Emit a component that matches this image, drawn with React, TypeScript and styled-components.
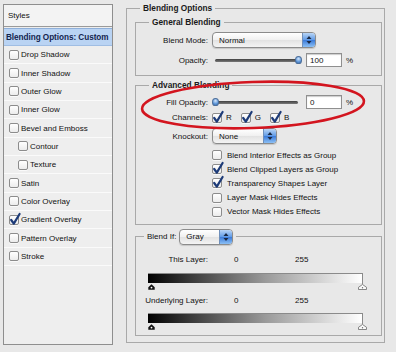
import React from "react";
import styled, { createGlobalStyle } from "styled-components";

const GlobalStyle = createGlobalStyle`
  html, body { margin: 0; padding: 0; background: #e8e8e8; }
  body {
    width: 396px; height: 352px; overflow: hidden;
    font-family: "Liberation Sans", Arial, sans-serif;
    font-size: 8px; color: #111;
  }
  * { box-sizing: border-box; }
`;

const Window = styled.div`
  position: relative;
  display: flex;
  align-items: flex-start;
  gap: 13px;
  width: 396px;
  height: 352px;
  padding: 3px 0 0 3px;
`;

/* ---------- left styles list ---------- */
const StylesPanel = styled.div`
  margin-top: 1px;
  width: 110px;
  height: 341px;
  border: 1px solid #8e8e8e;
  background: #eeeeee;
  display: flex;
  flex-direction: column;
`;

const StylesHeader = styled.div`
  height: 22px;
  display: flex;
  align-items: center;
  padding-left: 4px;
  background: #f3f3f3;
  border-bottom: 1px solid #9a9a9a;
`;

const SelectedRow = styled.div`
  height: 18px;
  display: flex;
  align-items: center;
  padding-left: 2px;
  margin-top: 1px;
  background: #b9d3f3;
  border-top: 1px solid #8fb0da;
  border-bottom: 1px solid #9fbde3;
  font-weight: bold;
  color: #13244e;
  font-size: 8.2px;
  letter-spacing: -0.05px;
  white-space: nowrap;
  overflow: hidden;
`;

const StyleRow = styled.div<{ $indent?: boolean }>`
  height: 18.35px;
  display: flex;
  align-items: center;
  gap: 2px;
  padding-left: ${(p) => (p.$indent ? 14 : 5)}px;
  border-bottom: 1px solid #fafafa;
  white-space: nowrap;
`;

/* ---------- right options ---------- */
const Group = styled.fieldset<{ $pad?: string }>`
  margin: 0;
  min-width: 0;
  border: 1px solid #a9a9a9;
  padding: ${(p) => p.$pad ?? "0"};
  display: flex;
  flex-direction: column;
`;

const Outer = styled(Group)`
  width: 259px;
  height: 340px;
  gap: 4px;
`;

const Legend = styled.legend<{ $ml?: number }>`
  margin-left: ${(p) => p.$ml ?? 13}px;
  padding: 0 3px;
  line-height: 10px;
  height: 10px;
  font-weight: bold;
  font-size: 8.3px;
  color: #1a1a1a;
`;

const BlendIfLegend = styled.legend`
  margin-left: 8px;
  padding: 0 3px;
  height: 16px;
  display: flex;
  align-items: center;
  gap: 3px;
`;

const FormRow = styled.div<{ $h: number; $mt?: number }>`
  display: grid;
  grid-template-columns: 72px auto;
  column-gap: 4px;
  align-items: center;
  height: ${(p) => p.$h}px;
  margin-top: ${(p) => p.$mt ?? 0}px;
`;

const Label = styled.span`
  text-align: right;
  white-space: nowrap;
`;

const Controls = styled.div<{ $gap?: number }>`
  display: flex;
  align-items: center;
  gap: ${(p) => p.$gap ?? 0}px;
`;

const Popup = styled.div<{ $w: number }>`
  width: ${(p) => p.$w}px;
  height: 16px;
  border: 1px solid #8b8b8b;
  border-radius: 4px;
  background: linear-gradient(#ffffff, #f0f0f0 50%, #e2e2e2 51%, #f4f4f4);
  display: flex;
  align-items: center;
  justify-content: space-between;
  padding-left: 6px;
  overflow: hidden;
  box-shadow: 0 1px 1px rgba(0, 0, 0, 0.15);
`;

const Stepper = styled.span`
  width: 13px;
  height: 100%;
  background: linear-gradient(#b9d5f6, #5f9ae6 50%, #3a7ad9 51%, #8cc0f5);
  border-left: 1px solid #6f8fba;
  display: flex;
  align-items: center;
  justify-content: center;
`;

const Track = styled.div<{ $w: number }>`
  position: relative;
  margin-left: 3px;
  width: ${(p) => p.$w}px;
  height: 3px;
  border-radius: 2px;
  background: linear-gradient(#3f3f3f, #7a7a7a);
`;

const Thumb = styled.span`
  position: absolute;
  top: -3px;
  width: 7px;
  height: 8px;
  margin-left: -3px;
  border-radius: 50% 50% 45% 45%;
  background: radial-gradient(circle at 50% 30%, #d4e6fb, #5f98da 60%, #3c6fb3);
  border: 1px solid #4d6f9b;
`;

const NumberBox = styled.div`
  width: 36px;
  height: 14px;
  margin-left: 8px;
  background: #fff;
  border: 1px solid #8f8f8f;
  box-shadow: inset 0 1px 1px rgba(0, 0, 0, 0.2);
  padding-left: 3px;
  display: flex;
  align-items: center;
`;

const Percent = styled.span`
  margin-left: 4px;
`;

const Box = styled.span`
  position: relative;
  display: inline-block;
  flex: none;
  width: 10px;
  height: 10px;
  border: 1px solid #8c8c8c;
  border-radius: 2px;
  background: linear-gradient(#ffffff, #ececec);
  box-shadow: 0 1px 0 rgba(255, 255, 255, 0.7);
`;

const CheckMark = styled.svg`
  position: absolute;
  left: 0px;
  top: -3px;
  overflow: visible;
`;

const ChannelLabel = styled.span`
  margin: 0 9px 0 4px;
`;

const CheckList = styled.div`
  display: flex;
  flex-direction: column;
  margin-top: 5px;
  padding-left: 76px;
`;

const CheckRow = styled.div`
  height: 14.2px;
  display: flex;
  align-items: center;
  gap: 5px;
  white-space: nowrap;
`;

const LayerRow = styled.div<{ $mt: number }>`
  display: grid;
  grid-template-columns: 98px 61px auto;
  align-items: center;
  height: 12px;
  margin-top: ${(p) => p.$mt}px;
`;

const LayerLabel = styled.span`
  text-align: right;
  padding-right: 26px;
  white-space: nowrap;
`;

const RampWrap = styled.div<{ $mt: number }>`
  margin: ${(p) => p.$mt}px 0 0 12px;
  width: 215px;
  display: flex;
  flex-direction: column;
`;

const Ramp = styled.div`
  height: 11px;
  border-top: 1px solid #8a8a8a;
  border-right: 1px solid #8a8a8a;
  background: linear-gradient(to right, #000 0%, #3a3a3a 20%, #9a9a9a 55%, #ffffff 100%) top / 100% 9px no-repeat;
`;

const Markers = styled.div`
  display: flex;
  justify-content: space-between;
  height: 6px;
  margin: 0 -4px 0 0;
`;

const Ellipse = styled.svg`
  position: absolute;
  left: 0;
  top: 0;
  pointer-events: none;
`;

function Check({ checked }: { checked?: boolean }) {
  return (
    <Box>
      {checked && (
        <CheckMark width="10" height="12" viewBox="0 0 10 12">
          <path d="M1.2 7 L3.8 10.6 L9.6 1" fill="none" stroke="#1d3b78" strokeWidth="2.2" strokeLinecap="round" strokeLinejoin="round" />
        </CheckMark>
      )}
    </Box>
  );
}

function Select({ value, width }: { value: string; width: number }) {
  return (
    <Popup $w={width}>
      <span>{value}</span>
      <Stepper>
        <svg width="6" height="10" viewBox="0 0 6 10">
          <path d="M0.5 4 L3 1 L5.5 4 Z M0.5 6 L3 9 L5.5 6 Z" fill="#1b2a44" />
        </svg>
      </Stepper>
    </Popup>
  );
}

function Slider({ value }: { value: number }) {
  return (
    <Track $w={83}>
      <Thumb style={{ left: `${value}%` }} />
    </Track>
  );
}

function BlackStop() {
  return (
    <svg width="7" height="6" viewBox="0 0 7 6">
      <path d="M3.5 0.3 L6.7 3.2 L6.7 5.7 L0.3 5.7 L0.3 3.2 Z" fill="#111" />
      <circle cx="3.5" cy="3.6" r="0.9" fill="#fff" />
    </svg>
  );
}

function WhiteStop() {
  return (
    <svg width="9" height="6" viewBox="0 0 9 6">
      <path d="M4.5 0.5 L8.5 3.3 L8.5 5.5 L0.5 5.5 L0.5 3.3 Z" fill="#fafafa" stroke="#6a6a6a" strokeWidth="0.8" />
      <circle cx="4.5" cy="3.8" r="0.7" fill="#6a6a6a" />
    </svg>
  );
}

const styleItems: { name: string; indent?: boolean; checked?: boolean }[] = [
  { name: "Drop Shadow" },
  { name: "Inner Shadow" },
  { name: "Outer Glow" },
  { name: "Inner Glow" },
  { name: "Bevel and Emboss" },
  { name: "Contour", indent: true },
  { name: "Texture", indent: true },
  { name: "Satin" },
  { name: "Color Overlay" },
  { name: "Gradient Overlay", checked: true },
  { name: "Pattern Overlay" },
  { name: "Stroke" },
];

const advancedChecks: { name: string; checked?: boolean }[] = [
  { name: "Blend Interior Effects as Group" },
  { name: "Blend Clipped Layers as Group", checked: true },
  { name: "Transparency Shapes Layer", checked: true },
  { name: "Layer Mask Hides Effects" },
  { name: "Vector Mask Hides Effects" },
];

export default function App() {
  return (
    <>
      <GlobalStyle />
      <Window>
        <StylesPanel>
          <StylesHeader>Styles</StylesHeader>
          <SelectedRow>Blending Options: Custom</SelectedRow>
          {styleItems.map((s) => (
            <StyleRow key={s.name} $indent={s.indent}>
              <Check checked={s.checked} />
              <span>{s.name}</span>
            </StyleRow>
          ))}
        </StylesPanel>

        <Outer $pad="4px 2px 0 8px">
          <Legend $ml={5}>Blending Options</Legend>

          <Group $pad="0 0 8px 0">
            <Legend>General Blending</Legend>
            <FormRow $h={16} $mt={5}>
              <Label>Blend Mode:</Label>
              <Select value="Normal" width={104} />
            </FormRow>
            <FormRow $h={14} $mt={5}>
              <Label>Opacity:</Label>
              <Controls>
                <Slider value={100} />
                <NumberBox>100</NumberBox>
                <Percent>%</Percent>
              </Controls>
            </FormRow>
          </Group>

          <Group $pad="0 0 5px 0">
            <Legend>Advanced Blending</Legend>
            <FormRow $h={14} $mt={5}>
              <Label>Fill Opacity:</Label>
              <Controls>
                <Slider value={0} />
                <NumberBox>0</NumberBox>
                <Percent>%</Percent>
              </Controls>
            </FormRow>
            <FormRow $h={13} $mt={2}>
              <Label>Channels:</Label>
              <Controls>
                <Check checked />
                <ChannelLabel>R</ChannelLabel>
                <Check checked />
                <ChannelLabel>G</ChannelLabel>
                <Check checked />
                <ChannelLabel>B</ChannelLabel>
              </Controls>
            </FormRow>
            <FormRow $h={15} $mt={4}>
              <Label>Knockout:</Label>
              <Select value="None" width={65} />
            </FormRow>
            <CheckList>
              {advancedChecks.map((c) => (
                <CheckRow key={c.name}>
                  <Check checked={c.checked} />
                  <span>{c.name}</span>
                </CheckRow>
              ))}
            </CheckList>
          </Group>

          <Group $pad="0 0 5px 0">
            <BlendIfLegend>
              <span>Blend If:</span>
              <Select value="Gray" width={54} />
            </BlendIfLegend>
            <LayerRow $mt={9}>
              <LayerLabel>This Layer:</LayerLabel>
              <span>0</span>
              <span>255</span>
            </LayerRow>
            <RampWrap $mt={7}>
              <Ramp />
              <Markers>
                <BlackStop />
                <WhiteStop />
              </Markers>
            </RampWrap>
            <LayerRow $mt={5}>
              <LayerLabel>Underlying Layer:</LayerLabel>
              <span>0</span>
              <span>255</span>
            </LayerRow>
            <RampWrap $mt={6}>
              <Ramp />
              <Markers>
                <BlackStop />
                <WhiteStop />
              </Markers>
            </RampWrap>
          </Group>
        </Outer>

        <Ellipse width="396" height="352" viewBox="0 0 396 352">
          <ellipse cx="253" cy="105" rx="111" ry="23" transform="rotate(-2 253 105)" fill="none" stroke="#d3151f" strokeWidth="2.6" />
        </Ellipse>
      </Window>
    </>
  );
}
